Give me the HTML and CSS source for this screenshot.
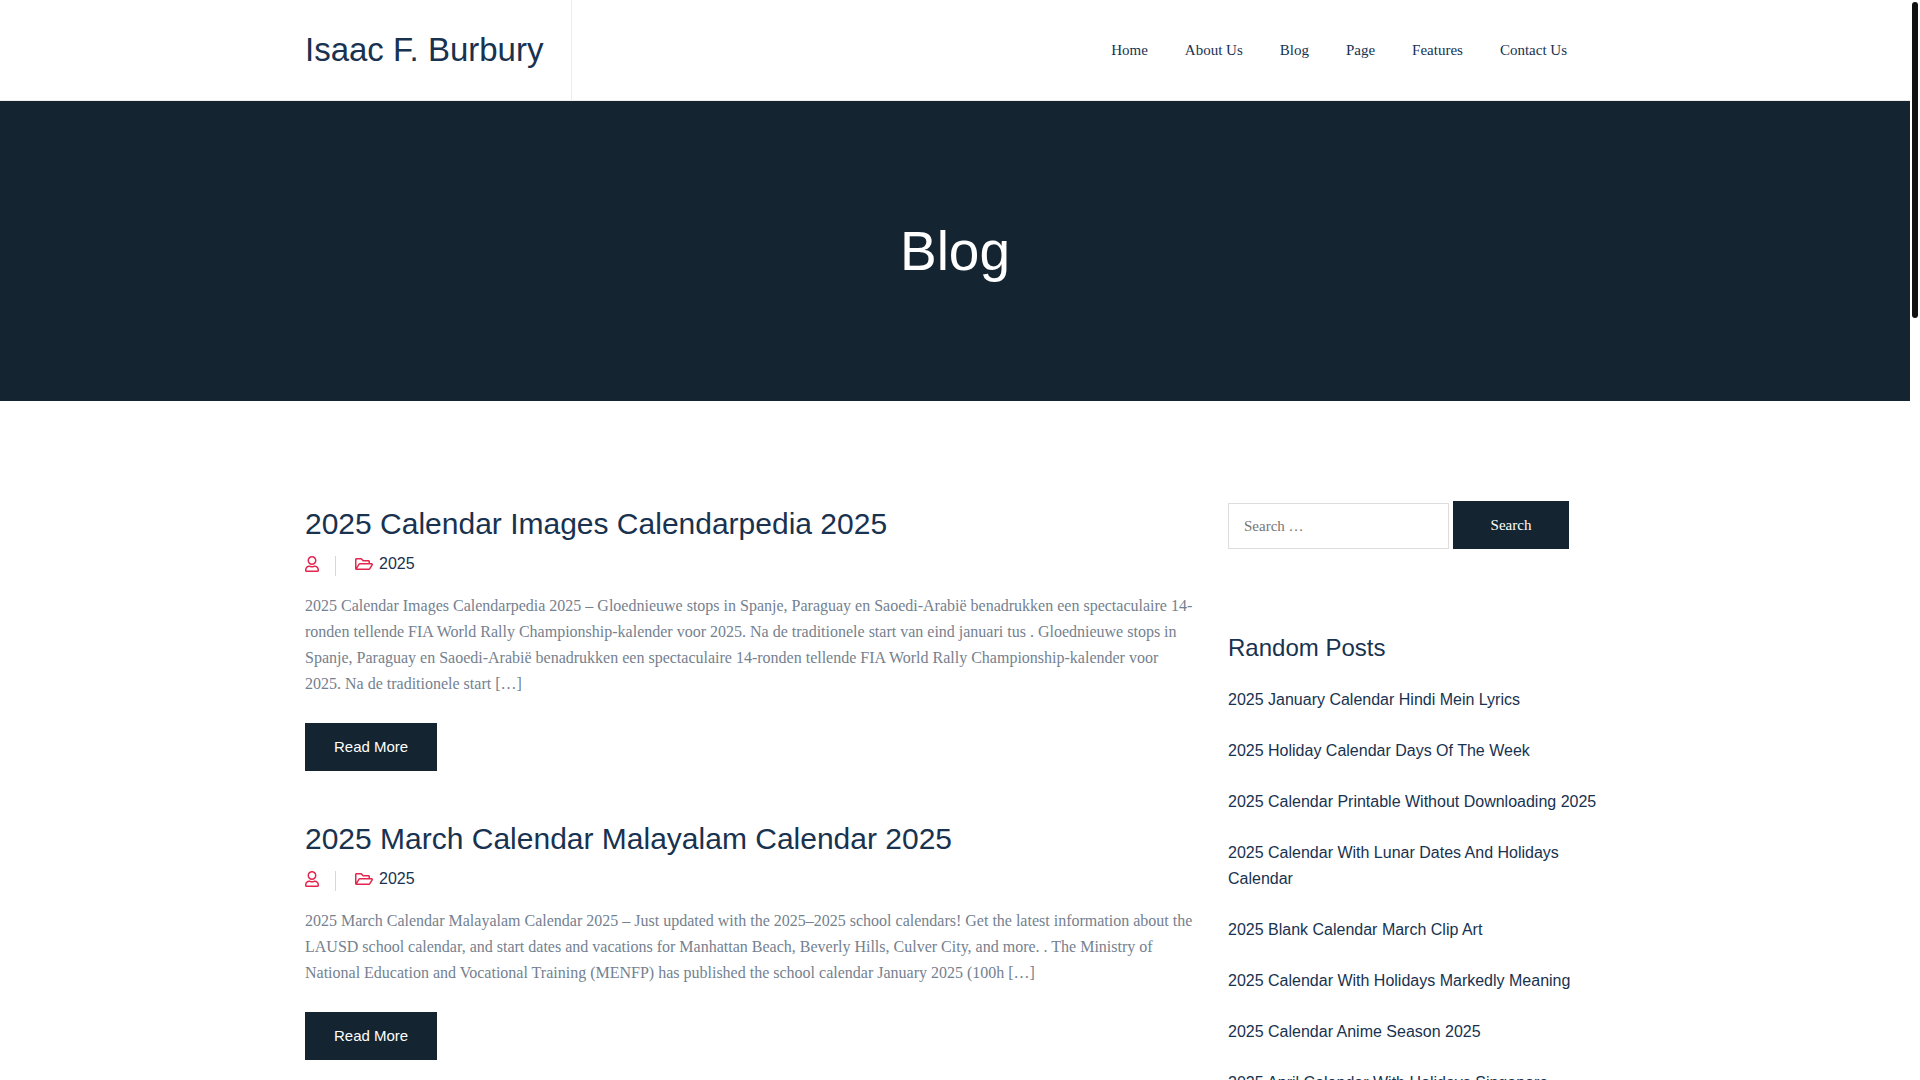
FILE: index.html
```
<!DOCTYPE html>
<html lang="en">
<head>
  <meta charset="UTF-8">
  <meta name="viewport" content="width=device-width, initial-scale=1.0">
  <title>Blog - Isaac F. Burbury</title>
  <link rel="stylesheet" href="styles.css">
</head>
<body>
  <!-- Icons used in the post meta -->
  <svg class="sprite" aria-hidden="true">
    <symbol id="icon-user" viewBox="0 0 448 512">
      <path d="M313.6 304c-28.7 0-42.5 16-89.6 16-47.1 0-60.8-16-89.6-16C60.2 304 0 364.2 0 438.4V464c0 26.5 21.5 48 48 48h352c26.5 0 48-21.5 48-48v-25.6c0-74.2-60.2-134.4-134.4-134.4zM400 464H48v-25.6c0-47.6 38.8-86.4 86.4-86.4 14.6 0 38.3 16 89.6 16 51.7 0 74.9-16 89.6-16 47.6 0 86.4 38.8 86.4 86.4V464zM224 288c79.5 0 144-64.5 144-144S303.5 0 224 0 80 64.5 80 144s64.5 144 144 144zm0-240c52.9 0 96 43.1 96 96s-43.1 96-96 96-96-43.1-96-96 43.1-96 96-96z"/>
    </symbol>
    <symbol id="icon-folder" viewBox="0 0 576 512">
      <path d="M527.9 224H480v-48c0-26.5-21.5-48-48-48H272l-64-64H48C21.5 64 0 85.5 0 112v288c0 26.5 21.5 48 48 48h400c16.5 0 31.9-8.5 40.7-22.6l79.9-128c20-31.9-3-73.4-40.7-73.4zM48 118c0-3.3 2.7-6 6-6h134.1l64 64H426c3.3 0 6 2.7 6 6v42H152c-16.8 0-32.4 8.8-41.1 23.2L48 351.4zm400 282H72l77.2-128H528z"/>
    </symbol>
  </svg>

  <header class="site-header">
    <div class="container header-inner">
      <div class="logo"><a href="#">Isaac F. Burbury</a></div>
      <nav class="main-menu">
        <a href="#">Home</a>
        <a href="#">About Us</a>
        <a href="#">Blog</a>
        <a href="#">Page</a>
        <a href="#">Features</a>
        <a href="#">Contact Us</a>
      </nav>
    </div>
  </header>

  <section class="page-banner">
    <h1>Blog</h1>
  </section>

  <div class="container content">
    <main>
      <article class="post">
        <h2><a href="#">2025 Calendar Images Calendarpedia 2025</a></h2>
        <div class="post-meta">
          <a class="author" href="#" aria-label="Author"><svg class="icon-user"><use href="#icon-user"/></svg></a>
          <a class="category" href="#"><svg class="icon-folder"><use href="#icon-folder"/></svg>2025</a>
        </div>
        <p>2025 Calendar Images Calendarpedia 2025 – Gloednieuwe stops in Spanje, Paraguay en Saoedi-Arabië benadrukken een spectaculaire 14-ronden tellende FIA World Rally Championship-kalender voor 2025. Na de traditionele start van eind januari tus . Gloednieuwe stops in Spanje, Paraguay en Saoedi-Arabië benadrukken een spectaculaire 14-ronden tellende FIA World Rally Championship-kalender voor 2025. Na de traditionele start […]</p>
        <a class="read-more" href="#">Read More</a>
      </article>

      <article class="post">
        <h2><a href="#">2025 March Calendar Malayalam Calendar 2025</a></h2>
        <div class="post-meta">
          <a class="author" href="#" aria-label="Author"><svg class="icon-user"><use href="#icon-user"/></svg></a>
          <a class="category" href="#"><svg class="icon-folder"><use href="#icon-folder"/></svg>2025</a>
        </div>
        <p>2025 March Calendar Malayalam Calendar 2025 – Just updated with the 2025–2025 school calendars! Get the latest information about the LAUSD school calendar, and start dates and vacations for Manhattan Beach, Beverly Hills, Culver City, and more. . The Ministry of National Education and Vocational Training (MENFP) has published the school calendar January 2025 (100h […]</p>
        <a class="read-more" href="#">Read More</a>
      </article>
    </main>

    <aside class="sidebar">
      <form class="search-form">
        <input type="search" placeholder="Search …" aria-label="Search for">
        <button type="submit">Search</button>
      </form>

      <h3>Random Posts</h3>
      <ul class="random-posts">
        <li><a href="#">2025 January Calendar Hindi Mein Lyrics</a></li>
        <li><a href="#">2025 Holiday Calendar Days Of The Week</a></li>
        <li><a href="#">2025 Calendar Printable Without Downloading 2025</a></li>
        <li><a href="#">2025 Calendar With Lunar Dates And Holidays Calendar</a></li>
        <li><a href="#">2025 Blank Calendar March Clip Art</a></li>
        <li><a href="#">2025 Calendar With Holidays Markedly Meaning</a></li>
        <li><a href="#">2025 Calendar Anime Season 2025</a></li>
        <li><a href="#">2025 April Calendar With Holidays Singapore</a></li>
      </ul>
    </aside>
  </div>

  <!-- Scroll indicator -->
  <div class="scroll-rail"><div class="scroll-thumb"></div></div>
</body>
</html>
```
FILE: styles.css
```
* {
  box-sizing: border-box;
}

html {
  scrollbar-width: none;
}

body {
  margin: 0;
  padding-right: 10px;
  font-family: "Liberation Serif", serif;
  font-size: 16px;
  line-height: 26px;
  color: #74818f;
  background: #fff;
}

a {
  color: #18324f;
  text-decoration: none;
}

h1, h2, h3 {
  margin: 0;
  font-family: "Liberation Sans", sans-serif;
  font-weight: 400;
  color: #18324f;
}

.sprite {
  display: none;
}

.container {
  max-width: 1330px;
  margin: 0 auto;
  padding: 0 15px;
}

/* Header */
.site-header {
  border-bottom: 1px solid #ededed;
}

.header-inner {
  display: flex;
  justify-content: space-between;
  align-items: center;
}

.logo {
  padding-right: 28px;
  border-right: 1px solid #ededed;
  font-family: "Liberation Sans", sans-serif;
  font-size: 33px;
  line-height: 100px;
}

.main-menu {
  display: flex;
  gap: 37px;
  padding-right: 38px;
  font-size: 15px;
}

/* Banner */
.page-banner {
  padding: 115px 15px;
  background: #142430;
  text-align: center;
}

.page-banner h1 {
  font-size: 55px;
  line-height: 70px;
  color: #fff;
}

/* Content */
.content {
  display: grid;
  grid-template-columns: minmax(0, 1fr) 29%;
  gap: 30px;
  padding-top: 100px;
}

.post {
  margin-bottom: 45px;
}

.post h2 {
  font-size: 30px;
  line-height: 46px;
}

.post-meta {
  display: flex;
  align-items: flex-end;
  margin: 5px 0 17px;
  font-family: "Liberation Sans", sans-serif;
  line-height: 24px;
}

.post-meta svg {
  display: block;
  height: 16px;
  fill: #e3264f;
}

.author {
  height: 20px;
  margin-right: 19px;
  padding-right: 16px;
  border-right: 1px solid #d8d8d8;
}

.icon-user {
  width: 14px;
}

.category {
  display: flex;
  align-items: center;
  gap: 6px;
}

.icon-folder {
  width: 18px;
}

.post p {
  margin: 0 0 26px;
}

.read-more {
  display: inline-block;
  padding: 0 29px;
  background: #142430;
  color: #fff;
  font-family: "Liberation Sans", sans-serif;
  font-size: 15px;
  line-height: 48px;
  vertical-align: top;
}

/* Sidebar */
.search-form {
  display: flex;
  align-items: flex-end;
  gap: 4px;
  margin-bottom: 83px;
}

.search-form input {
  width: 221px;
  height: 46px;
  padding: 0 15px;
  border: 1px solid #ddd;
  font-family: inherit;
  font-size: 15px;
}

.search-form button {
  width: 116px;
  height: 48px;
  border: 0;
  background: #142430;
  color: #fff;
  font-family: inherit;
  font-size: 15px;
}

.sidebar h3 {
  margin-bottom: 23px;
  font-size: 24px;
  line-height: 32px;
}

.random-posts {
  margin: 0;
  padding: 0;
  list-style: none;
  font-family: "Liberation Sans", sans-serif;
}

.random-posts li {
  margin-bottom: 25px;
}

/* Scroll indicator */
.scroll-rail {
  position: fixed;
  top: 0;
  right: 0;
  bottom: 0;
  width: 10px;
  padding: 2px;
}

.scroll-thumb {
  height: 316px;
  border-radius: 3px;
  background: #111;
}
```
